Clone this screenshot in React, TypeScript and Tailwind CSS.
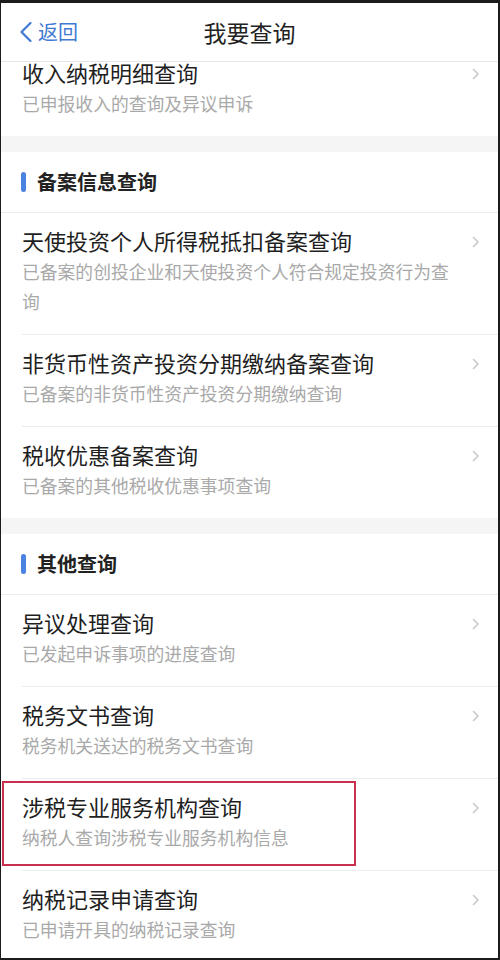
import type { ReactNode } from "react";

type Item = { title: string; desc: string; marked?: boolean };

const filingItems: Item[] = [
  {
    title: "天使投资个人所得税抵扣备案查询",
    desc: "已备案的创投企业和天使投资个人符合规定投资行为查询",
  },
  { title: "非货币性资产投资分期缴纳备案查询", desc: "已备案的非货币性资产投资分期缴纳查询" },
  { title: "税收优惠备案查询", desc: "已备案的其他税收优惠事项查询" },
];

const otherItems: Item[] = [
  { title: "异议处理查询", desc: "已发起申诉事项的进度查询" },
  { title: "税务文书查询", desc: "税务机关送达的税务文书查询" },
  { title: "涉税专业服务机构查询", desc: "纳税人查询涉税专业服务机构信息", marked: true },
  { title: "纳税记录申请查询", desc: "已申请开具的纳税记录查询" },
];

const font = { fontFamily: '"Noto Sans CJK SC", "Noto Sans", sans-serif' };

export default function App() {
  return (
    <div
      className="h-[960px] w-[500px] overflow-hidden border-t-[3px] border-r-2 border-b-2 border-l border-[#1c1c1c] bg-white"
      style={font}
    >
      {/* Nav bar */}
      <header className="relative z-10 flex h-[59px] items-center justify-center border-b border-[#e6e6e6] bg-white">
        <button className="absolute left-[18px] top-0 flex h-full items-center gap-[5px] text-[20px] text-[#3f7ad4]">
          <svg width="14" height="22" viewBox="0 0 14 22" fill="none">
            <path d="M11.5 2 L2.5 11 L11.5 20" stroke="#3f7ad4" strokeWidth="2.2" strokeLinecap="round" strokeLinejoin="round" />
          </svg>
          返回
        </button>
        <h1 className="text-[23px] text-[#222]">我要查询</h1>
      </header>

      {/* First item, partly scrolled under the bar */}
      <Row item={{ title: "收入纳税明细查询", desc: "已申报收入的查询及异议申诉" }} first last />

      <Gap />
      <SectionHeader>备案信息查询</SectionHeader>
      {filingItems.map((it, i) => (
        <Row key={it.title} item={it} last={i === filingItems.length - 1} />
      ))}

      <Gap />
      <SectionHeader>其他查询</SectionHeader>
      {otherItems.map((it, i) => (
        <Row key={it.title} item={it} last={i === otherItems.length - 1} />
      ))}
    </div>
  );
}

function Gap() {
  return <div className="h-[16px] bg-[#f5f5f6]" />;
}

function SectionHeader({ children }: { children: ReactNode }) {
  return (
    <div className="flex h-[61px] items-center gap-[11px] border-b border-[#ececec] pl-[20px]">
      <span className="h-[20px] w-[5px] rounded-full bg-[#4a83e0]" />
      <h2 className="text-[20px] font-bold text-[#222]">{children}</h2>
    </div>
  );
}

function Row({ item, first, last }: { item: Item; first?: boolean; last?: boolean }) {
  return (
    <div className={`relative pl-[21px] ${first ? "-mt-[5px]" : ""}`}>
      <div
        className={`flex items-start pr-[18px] pb-[18px] ${first ? "pt-0" : "pt-[12px]"} ${
          last ? "" : "border-b border-[#ececec]"
        }`}
      >
        <div className="min-w-0 flex-1 pr-[18px]">
          <div className="text-[22px] leading-[31px] text-[#1f1f1f]">{item.title}</div>
          <div className="text-[17.8px] leading-[30px] text-[#a9a9a9]">{item.desc}</div>
        </div>
        <svg className="mt-[11px] shrink-0" width="8" height="12" viewBox="0 0 8 12" fill="none">
          <path d="M1.5 1.5 L6 6 L1.5 10.5" stroke="#c8c8c8" strokeWidth="1.6" strokeLinecap="round" strokeLinejoin="round" />
        </svg>
      </div>
      {item.marked && (
        <div className="pointer-events-none absolute left-[1px] top-[2px] h-[85px] w-[354px] border-2 border-[#c9304e]" />
      )}
    </div>
  );
}
